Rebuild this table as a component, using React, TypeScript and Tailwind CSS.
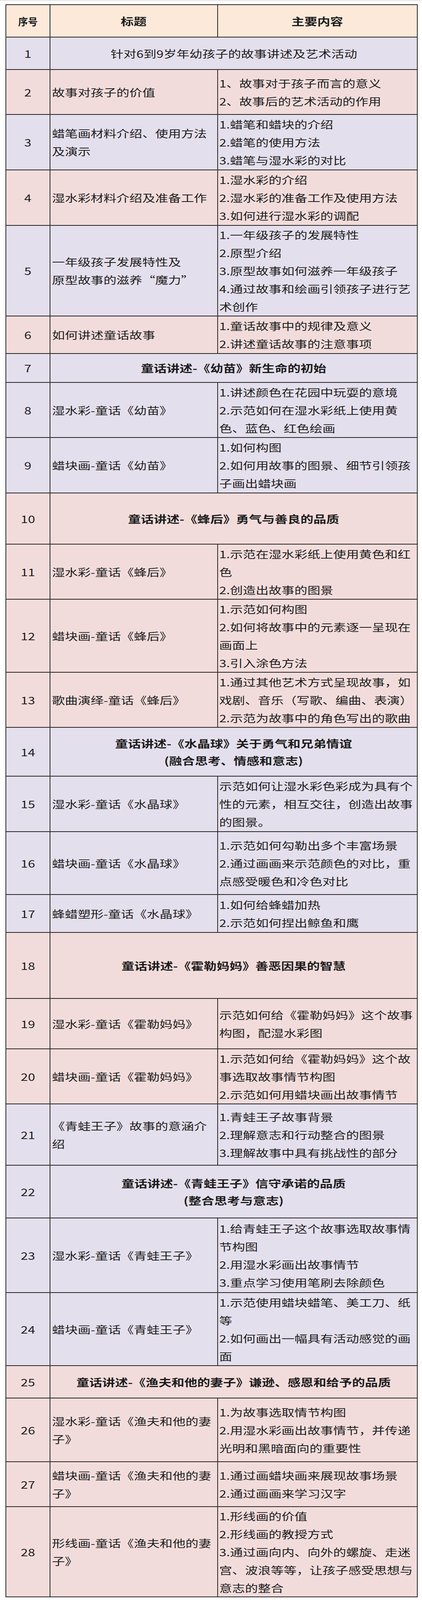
import React from 'react'

const LAV = 'bg-[#e4dfec]'
const PINK = 'bg-[#f2dcdb]'

type Row = {
  no: string
  h: string
  bg: string
  title?: string[]
  items?: string[]
  head?: string[]
  bold?: boolean
}

const rows: Row[] = [
  { no: '1', h: 'h-[83px]', bg: LAV, head: ['针对6到9岁年幼孩子的故事讲述及艺术活动'] },
  {
    no: '2',
    h: 'h-[115px]',
    bg: PINK,
    title: ['故事对孩子的价值'],
    items: ['1、故事对于孩子而言的意义', '2、故事后的艺术活动的作用'],
  },
  {
    no: '3',
    h: 'h-[142px]',
    bg: LAV,
    title: ['蜡笔画材料介绍、使用方法', '及演示'],
    items: ['1.蜡笔和蜡块的介绍', '2.蜡笔的使用方法', '3.蜡笔与湿水彩的对比'],
  },
  {
    no: '4',
    h: 'h-[142px]',
    bg: PINK,
    title: ['湿水彩材料介绍及准备工作'],
    items: ['1.湿水彩的介绍', '2.湿水彩的准备工作及使用方法', '3.如何进行湿水彩的调配'],
  },
  {
    no: '5',
    h: 'h-[232px]',
    bg: LAV,
    title: ['一年级孩子发展特性及', '原型故事的滋养“魔力”'],
    items: [
      '1.一年级孩子的发展特性',
      '2.原型介绍',
      '3.原型故事如何滋养一年级孩子',
      '4.通过故事和绘画引领孩子进行艺',
      '术创作',
    ],
  },
  {
    no: '6',
    h: 'h-[96px]',
    bg: PINK,
    title: ['如何讲述童话故事'],
    items: ['1.童话故事中的规律及意义', '2.讲述童话故事的注意事项'],
  },
  { no: '7', h: 'h-[74px]', bg: LAV, head: ['童话讲述-《幼苗》新生命的初始'], bold: true },
  {
    no: '8',
    h: 'h-[141px]',
    bg: LAV,
    title: ['湿水彩-童话《幼苗》'],
    items: ['1.讲述颜色在花园中玩耍的意境', '2.示范如何在湿水彩纸上使用黄', '色、蓝色、红色绘画'],
  },
  {
    no: '9',
    h: 'h-[142px]',
    bg: LAV,
    title: ['蜡块画-童话《幼苗》'],
    items: ['1.如何构图', '2.如何用故事的图景、细节引领孩', '子画出蜡块画'],
  },
  { no: '10', h: 'h-[131px]', bg: PINK, head: ['童话讲述-《蜂后》勇气与善良的品质'], bold: true },
  {
    no: '11',
    h: 'h-[141px]',
    bg: PINK,
    title: ['湿水彩-童话《蜂后》'],
    items: ['1.示范在湿水彩纸上使用黄色和红', '色', '2.创造出故事的图景'],
  },
  {
    no: '12',
    h: 'h-[187px]',
    bg: PINK,
    title: ['蜡块画-童话《蜂后》'],
    items: ['1.示范如何构图', '2.如何将故事中的元素逐一呈现在', '画面上', '3.引入涂色方法'],
  },
  {
    no: '13',
    h: 'h-[141px]',
    bg: PINK,
    title: ['歌曲演绎-童话《蜂后》'],
    items: ['1.通过其他艺术方式呈现故事，如', '戏剧、音乐（写歌、编曲、表演）', '2.示范为故事中的角色写出的歌曲'],
  },
  {
    no: '14',
    h: 'h-[125px]',
    bg: LAV,
    head: ['童话讲述-《水晶球》关于勇气和兄弟情谊', '(融合思考、情感和意志)'],
    bold: true,
  },
  {
    no: '15',
    h: 'h-[142px]',
    bg: LAV,
    title: ['湿水彩-童话《水晶球》'],
    items: ['示范如何让湿水彩色彩成为具有个', '性的元素，相互交往，创造出故事', '的图景。'],
  },
  {
    no: '16',
    h: 'h-[161px]',
    bg: LAV,
    title: ['蜡块画-童话《水晶球》'],
    items: ['1.示范如何勾勒出多个丰富场景', '2.通过画画来示范颜色的对比，重', '点感受暖色和冷色对比'],
  },
  {
    no: '17',
    h: 'h-[97px]',
    bg: LAV,
    title: ['蜂蜡塑形-童话《水晶球》'],
    items: ['1.如何给蜂蜡加热', '2.示范如何捏出鲸鱼和鹰'],
  },
  { no: '18', h: 'h-[169px]', bg: PINK, head: ['童话讲述-《霍勒妈妈》善恶因果的智慧'], bold: true },
  {
    no: '19',
    h: 'h-[129px]',
    bg: PINK,
    title: ['湿水彩-童话《霍勒妈妈》'],
    items: ['示范如何给《霍勒妈妈》这个故事', '构图，配湿水彩图'],
  },
  {
    no: '20',
    h: 'h-[141px]',
    bg: PINK,
    title: ['蜡块画-童话《霍勒妈妈》'],
    items: ['1.示范如何给《霍勒妈妈》这个故', '事选取故事情节构图', '2.示范如何用蜡块画出故事情节'],
  },
  {
    no: '21',
    h: 'h-[157px]',
    bg: LAV,
    title: ['《青蛙王子》故事的意涵介', '绍'],
    items: ['1.青蛙王子故事背景', '2.理解意志和行动整合的图景', '3.理解故事中具有挑战性的部分'],
  },
  {
    no: '22',
    h: 'h-[135px]',
    bg: LAV,
    head: ['童话讲述-《青蛙王子》信守承诺的品质', '(整合思考与意志)'],
    bold: true,
  },
  {
    no: '23',
    h: 'h-[191px]',
    bg: LAV,
    title: ['湿水彩-童话《青蛙王子》'],
    items: ['1.给青蛙王子这个故事选取故事情', '节构图', '2.用湿水彩画出故事情节', '3.重点学习使用笔刷去除颜色'],
  },
  {
    no: '24',
    h: 'h-[187px]',
    bg: LAV,
    title: ['蜡块画-童话《青蛙王子》'],
    items: ['1.示范使用蜡块蜡笔、美工刀、纸', '等', '2.如何画出一幅具有活动感觉的画', '面'],
  },
  {
    no: '25',
    h: 'h-[83px]',
    bg: PINK,
    head: ['童话讲述-《渔夫和他的妻子》谦逊、感恩和给予的品质'],
    bold: true,
  },
  {
    no: '26',
    h: 'h-[163px]',
    bg: PINK,
    title: ['湿水彩-童话《渔夫和他的妻', '子》'],
    items: ['1.为故事选取情节构图', '2.用湿水彩画出故事情节，并传递', '光明和黑暗面向的重要性'],
  },
  {
    no: '27',
    h: 'h-[115px]',
    bg: PINK,
    title: ['蜡块画-童话《渔夫和他的妻', '子》'],
    items: ['1.通过画蜡块画来展现故事场景', '2.通过画画来学习汉字'],
  },
  {
    no: '28',
    h: 'h-[231px]',
    bg: PINK,
    title: ['形线画-童话《渔夫和他的妻', '子》'],
    items: [
      '1.形线画的价值',
      '2.形线画的教授方式',
      '3.通过画向内、向外的螺旋、走迷',
      '宫、波浪等等，让孩子感受思想与',
      '意志的整合',
    ],
  },
]

// the source picture is stretched sideways, so every line is widened
function Lines({ lines, center }: { lines: string[]; center?: boolean }) {
  return (
    <div className={center ? 'flex flex-col items-center' : 'flex flex-col items-start'}>
      {lines.map((line, i) => (
        <div
          key={i}
          className={
            center
              ? 'w-fit whitespace-nowrap scale-x-[1.27] origin-center'
              : 'w-fit whitespace-nowrap scale-x-[1.27] origin-left'
          }
        >
          {line}
        </div>
      ))}
    </div>
  )
}

function TableRow({ row }: { row: Row }) {
  return (
    <div className={`grid grid-cols-[113px_429px_509px] border-b-2 border-[#262626] ${row.h} ${row.bg}`}>
      <div className="flex items-center justify-center border-r-2 border-[#262626]">
        <Lines lines={[row.no]} center />
      </div>
      {row.head ? (
        <div
          className={`col-span-2 flex items-center justify-center leading-[44px] ${
            row.bold ? 'font-bold' : ''
          }`}
        >
          <Lines lines={row.head} center />
        </div>
      ) : (
        <>
          <div className="flex items-center border-r-2 border-[#262626] pl-[4px]">
            <Lines lines={row.title ?? []} />
          </div>
          <div className="flex items-center pl-[3px]">
            <Lines lines={row.items ?? []} />
          </div>
        </>
      )}
    </div>
  )
}

export default function App() {
  return (
    <div className="overflow-hidden bg-white font-['Noto_Sans_CJK_SC',sans-serif] text-[26px] leading-[46px] text-[#1c1c1c]">
      <div className="h-[3px] bg-[#ebebeb]" />
      <div className="mt-[8px] ml-[14px] w-[1055px] border-x-2 border-t-2 border-[#262626]">
        <div className="grid h-[83px] grid-cols-[113px_429px_509px] border-b-2 border-[#262626] bg-[#fde9d9] font-bold">
          <div className="flex items-center justify-center border-r-2 border-[#262626] text-[25px]">序号</div>
          <div className="flex items-center justify-center border-r-2 border-[#262626]">
            <Lines lines={['标题']} center />
          </div>
          <div className="flex items-center justify-center">
            <Lines lines={['主要内容']} center />
          </div>
        </div>
        {rows.map((row) => (
          <TableRow key={row.no} row={row} />
        ))}
      </div>
    </div>
  )
}
